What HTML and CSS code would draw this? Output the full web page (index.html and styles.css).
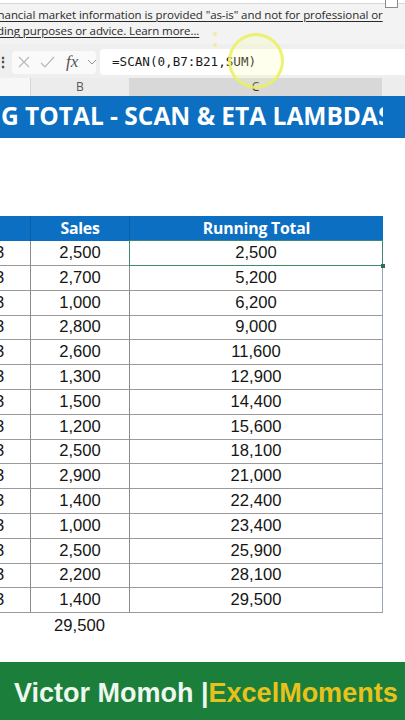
FILE: index.html
```html
<!DOCTYPE html>
<html>
<head>
<meta charset="utf-8">
<link rel="stylesheet" href="styles.css">
</head>
<body>
<div class="screen">
  <div class="notice">
    <div class="notice-top"><span class="notice-check"></span></div>
    <p class="notice-line notice-l1"><u>financial market information is provided "as-is" and not for professional or</u></p>
    <p class="notice-line notice-l2"><u>trading purposes or advice. Learn more...</u></p>
  </div>

  <div class="formula-bar">
    <span class="namebox-grip">⋮</span>
    <div class="fx-controls">
      <svg width="84" height="22" viewBox="0 0 84 22">
        <path d="M7 6 L17 16 M17 6 L7 16" stroke="#b8b8b8" stroke-width="1.2" fill="none"/>
        <path d="M29 12 L33 16 L42 6" stroke="#b8b8b8" stroke-width="1.2" fill="none"/>
        <path d="M76 9 L80 13 L84 9" stroke="#909090" stroke-width="1" fill="none"/>
      </svg>
      <span class="fx-label">fx</span>
    </div>
    <div class="formula-input">=SCAN(0,B7:B21,SUM)</div>
  </div>

  <div class="col-headers">
    <div class="colh colh-a"></div>
    <div class="colh colh-b">B</div>
    <div class="colh colh-c">C</div>
    <div class="colh colh-d"></div>
  </div>

  <div class="title-bar"><div class="title-text">G TOTAL - SCAN &amp; ETA LAMBDAS</div></div>

  <div class="spacer"></div>

  <div class="table">
    <div class="th th-a"></div><div class="th">Sales</div><div class="th">Running Total</div>
  </div>
  <div class="rows" id="rows"></div>

  <div class="total-row">
    <div class="tc-a"></div><div class="tc-b">29,500</div>
  </div>

  <div class="footer">
    <span class="f-name">Victor Momoh |</span><span class="f-brand">ExcelMoments</span>
  </div>

  <div class="cursor-ring"></div>
  <div class="dot dot1"></div>
  <div class="dot dot2"></div>
</div>
<script src="app.js"></script>
</body>
</html>
```
FILE: app.js
```js
const sales = [2500,2700,1000,2800,2600,1300,1500,1200,2500,2900,1400,1000,2500,2200,1400];
const rows = document.getElementById('rows');
let run = 0;
const fmt = n => n.toLocaleString('en-US');
sales.forEach((s, i) => {
  run += s;
  const r = document.createElement('div');
  r.className = 'row';
  r.innerHTML = '<div class="c c-a">3</div><div class="c c-b">' + fmt(s) + '</div><div class="c c-c' + (i === 0 ? ' selected' : '') + '">' + fmt(run) + '</div>';
  rows.appendChild(r);
});
```
FILE: styles.css
```css
* { box-sizing: border-box; }
html, body { margin: 0; padding: 0; }
body { background: #fff; }
.screen {
  position: relative;
  width: 405px;
  height: 720px;
  overflow: hidden;
  background: #fff;
  font-family: "Liberation Sans", Arial, sans-serif;
}

/* notice */
.notice { height: 44px; background: #f3f3f3; }
.notice-top {
  height: 4px;
  background: #fff;
  border-bottom: 1px solid #d8d8d8;
  display: flex;
  justify-content: flex-end;
  padding-right: 7px;
}
.notice-check {
  width: 13px;
  height: 8px;
  border: 1px solid #8a8a8a;
  border-top: none;
  background: #fff;
}
.notice-line {
  margin: 0;
  font-family: "Open Sans", "Noto Sans", sans-serif;
  font-size: 11.5px;
  line-height: 16px;
  color: #2a2a2a;
  white-space: nowrap;
  letter-spacing: -0.08px;
}
.notice-l1 { padding-top: 3px; text-indent: -9px; }
.notice-l2 { text-indent: -18px; }
.notice-line u { text-decoration-thickness: 1px; text-underline-offset: 2px; }

/* formula bar */
.formula-bar {
  height: 34px;
  background: #efefef;
  display: flex;
  align-items: center;
  padding-top: 2px;
}
.namebox-grip {
  width: 12px;
  font-size: 14px;
  color: #444;
  margin-left: -4px;
  font-weight: bold;
}
.fx-controls {
  position: relative;
  width: 84px;
  height: 23px;
  background: #fafafa;
  border-radius: 4px;
  margin-left: 4px;
  display: flex;
  align-items: center;
}
.fx-controls svg { display: block; }
.fx-label {
  position: absolute;
  left: 54px;
  top: 1px;
  font-family: "Liberation Serif", serif;
  font-style: italic;
  font-size: 17px;
  color: #555;
}
.formula-input {
  flex: 1;
  height: 26px;
  margin-left: 4px;
  background: #fff;
  border-radius: 4px 0 0 4px;
  font-family: "DejaVu Sans Mono", monospace;
  font-size: 12.6px;
  line-height: 26px;
  padding-left: 12px;
  color: #1a1a1a;
}

/* column headers */
.col-headers {
  height: 18px;
  display: flex;
  background: #efefef;
  font-family: "Open Sans", sans-serif;
  font-size: 12px;
  color: #555;
}
.colh { height: 18px; line-height: 17px; text-align: center; }
.colh-a { width: 30px; background: #f7f7f7; }
.colh-b { width: 99px; background: #ececec; border-left: 1px solid #d6d6d6; }
.colh-c { width: 253px; background: #d8d8d8; color: #333; }
.colh-d { flex: 1; background: #ededed; }

/* title */
.title-bar {
  height: 42px;
  background: #0c6fc2;
  display: flex;
  align-items: center;
}
.title-text {
  width: 383px;
  overflow: hidden;
  white-space: nowrap;
  font-family: "Open Sans", sans-serif;
  font-weight: 700;
  font-size: 24.5px;
  color: #fff;
  padding-left: 1px;
  letter-spacing: 0;
  margin-top: -4px;
}

.spacer { height: 78px; }

/* table */
.table {
  display: grid;
  grid-template-columns: 30px 99px 254px;
  height: 25px;
}
.th {
  background: #0c6fc2;
  color: #fff;
  font-family: "Open Sans", sans-serif;
  font-weight: 700;
  font-size: 15.8px;
  text-align: center;
  line-height: 25px;
  border-left: 1px solid #0a5ea5;
  letter-spacing: -0.2px;
}
.th-a { border-left: none; }

.rows { display: flex; flex-direction: column; }
.row {
  display: grid;
  grid-template-columns: 30px 99px 254px;
  height: 24.8px;
}
.c {
  font-size: 16.6px;
  color: #151515;
  line-height: 24px;
  text-align: center;
  border-bottom: 1px solid #9a9a9a;
}
.c-a { text-align: left; text-indent: -5px; }
.c-b { border-left: 1px solid #8c8c8c; }
.c-c { border-left: 1px solid #8c8c8c; border-right: 1px solid #97a6b6; }
.selected { position: relative; }
.selected::after {
  content: "";
  position: absolute;
  left: -1px;
  top: -1px;
  right: -1px;
  bottom: -1px;
  border: 1px solid #3d8a6c;
}
.selected::before {
  content: "";
  position: absolute;
  right: -3px;
  bottom: -3px;
  width: 4px;
  height: 4px;
  background: #2e6e52;
  z-index: 1;
}

.total-row {
  display: grid;
  grid-template-columns: 30px 99px;
  height: 25px;
}
.tc-b { font-size: 16.6px; color: #151515; text-align: center; line-height: 25px; }

.footer {
  margin-top: 24px;
  height: 58px;
  background: #1b7e3b;
  display: flex;
  align-items: center;
  padding-left: 14px;
  padding-top: 6px;
  font-family: "Liberation Sans", Arial, sans-serif;
  font-weight: 700;
  font-size: 27px;
  white-space: nowrap;
}
.f-name { color: #eef7ee; }
.f-brand { color: #e8c21c; }

/* cursor highlight overlay */
.cursor-ring {
  position: absolute;
  left: 228px;
  top: 33px;
  width: 56px;
  height: 56px;
  border-radius: 50%;
  border: 3px solid rgba(236, 240, 90, 0.85);
  background: rgba(255, 255, 160, 0.18);
}
.dot {
  position: absolute;
  width: 4px;
  height: 4px;
  border-radius: 50%;
  background: rgba(240, 235, 120, 0.7);
}
.dot1 { left: 213px; top: 32px; }
.dot2 { left: 213px; top: 43px; }
```
